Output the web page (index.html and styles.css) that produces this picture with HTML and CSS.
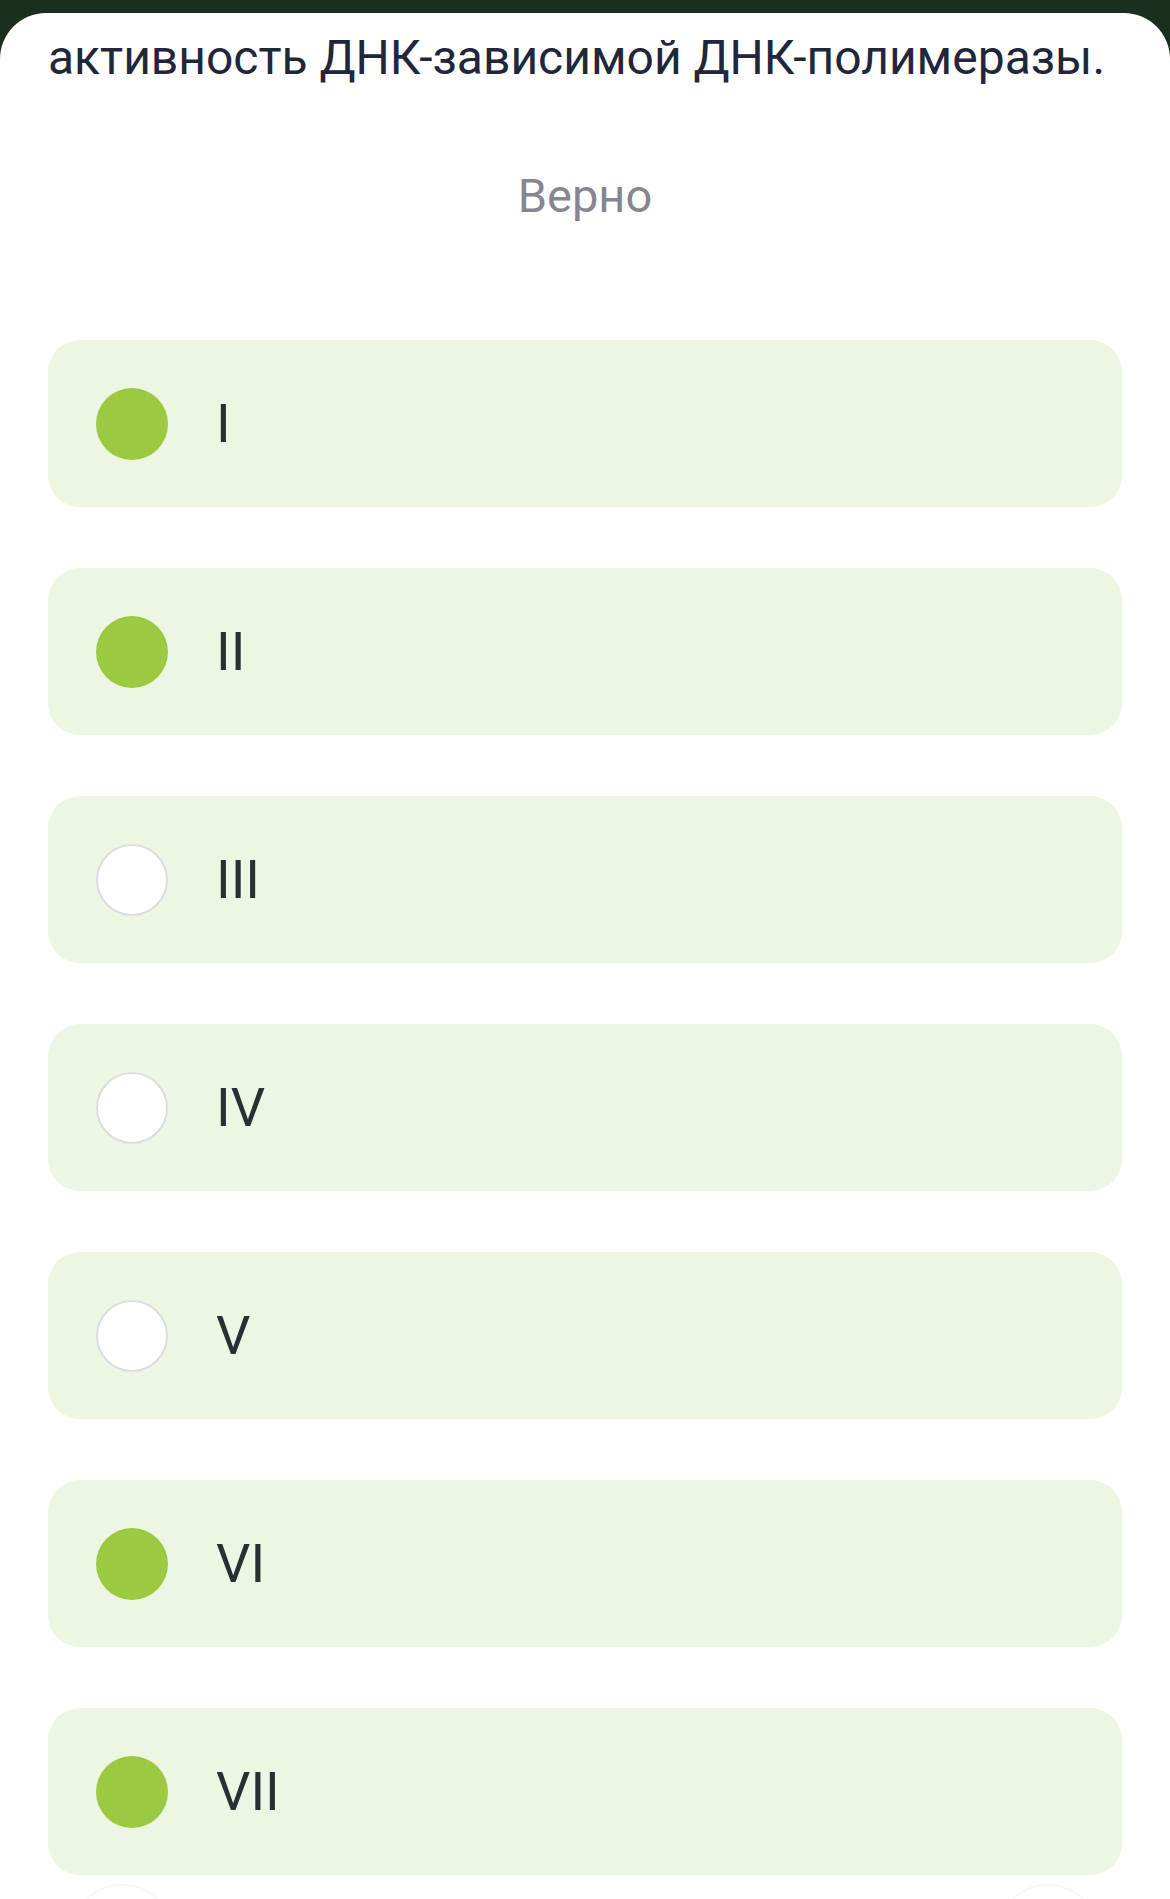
FILE: index.html
```html
<!DOCTYPE html>
<html lang="ru">
<head>
    <meta charset="UTF-8">
    <meta name="viewport" content="width=device-width, initial-scale=1.0">
    <title>Вопрос</title>
    <link rel="stylesheet" href="styles.css">
</head>
<body>

    <main class="sheet">
        <p class="question">активность ДНК-зависимой ДНК-полимеразы.</p>
        <p class="verdict">Верно</p>

        <!-- Options -->
        <ul class="options">
            <li class="option checked"><span class="mark"></span><span class="label">I</span></li>
            <li class="option checked"><span class="mark"></span><span class="label">II</span></li>
            <li class="option"><span class="mark"></span><span class="label">III</span></li>
            <li class="option"><span class="mark"></span><span class="label">IV</span></li>
            <li class="option"><span class="mark"></span><span class="label">V</span></li>
            <li class="option checked"><span class="mark"></span><span class="label">VI</span></li>
            <li class="option checked"><span class="mark"></span><span class="label">VII</span></li>
        </ul>

        <div class="nav">
            <button class="nav-button" aria-label="Назад"></button>
            <button class="nav-button" aria-label="Вперёд"></button>
        </div>
    </main>

</body>
</html>
```

FILE: styles.css
```css
html, body {
    margin: 0;
    background-color: #1b2f1f;
    font-family: 'Roboto', 'Noto Sans', sans-serif;
}

.sheet {
    margin-top: 13px;
    background-color: #ffffff;
    border-radius: 46px 46px 0 0;
    padding-top: 15px;
    min-height: 1886px;
    overflow: hidden;
}

.question {
    margin: 0;
    padding: 0 48px;
    font-size: 48px;
    line-height: 60px;
    color: #22263a;
}

.verdict {
    margin: 80px 0 0;
    text-align: center;
    font-size: 47px;
    line-height: 56px;
    color: #86868e;
}

.options {
    list-style: none;
    margin: 116px 48px 0;
    padding: 0;
    display: flex;
    flex-direction: column;
    gap: 61px;
}

.option {
    height: 167px;
    box-sizing: border-box;
    padding: 0 48px;
    display: flex;
    align-items: center;
    gap: 48px;
    background-color: #edf6e2;
    border-radius: 32px;
}

.mark {
    width: 72px;
    height: 72px;
    flex-shrink: 0;
    box-sizing: border-box;
    border-radius: 50%;
    background-color: #ffffff;
    border: 2px solid #dcdce0;
}

.option.checked .mark {
    background-color: #9bc93f;
    border: none;
}

.label {
    font-size: 54px;
    line-height: 1;
    color: #2b2e33;
}

.nav {
    display: flex;
    justify-content: space-between;
    padding: 0 70px;
    margin-top: 9px;
}

.nav-button {
    width: 104px;
    height: 104px;
    border-radius: 50%;
    border: 2px solid #f8f8f8;
    background-color: #ffffff;
    padding: 0;
}
```
